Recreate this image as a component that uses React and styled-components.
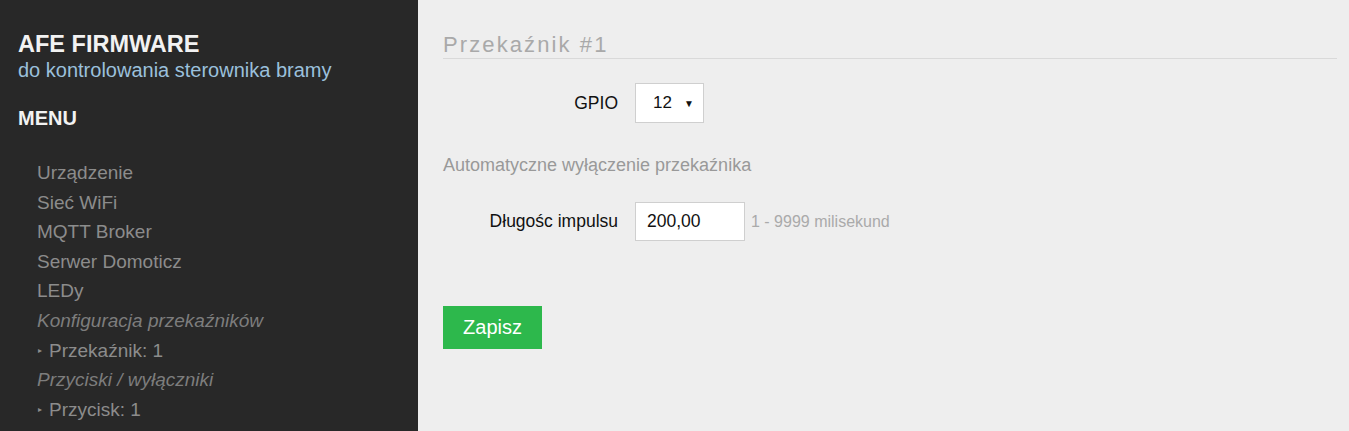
import React from "react";
import styled, { createGlobalStyle } from "styled-components";

const Global = createGlobalStyle`
  html, body { margin: 0; padding: 0; height: 100%; }
  body { font-family: "Liberation Sans", Arial, sans-serif; background: #eeeeee; }
  #root { height: 100%; }
`;

const Layout = styled.div`
  display: flex;
  min-height: 431px;
`;

const Sidebar = styled.aside`
  width: 418px;
  flex: none;
  background: #282828;
  padding: 31px 0 0 18px;
  box-sizing: border-box;
`;

const Brand = styled.h1`
  margin: 0;
  font-size: 23.5px;
  line-height: 26px;
  font-weight: bold;
  color: #f2f2f2;
`;

const Tagline = styled.div`
  margin-top: 1px;
  font-size: 20px;
  line-height: 24px;
  color: #9bc0dc;
`;

const MenuTitle = styled.h3`
  margin: 24px 0 0;
  font-size: 20px;
  line-height: 24px;
  font-weight: bold;
  color: #f2f2f2;
`;

const MenuList = styled.ul`
  list-style: none;
  margin: 28px 0 0;
  padding: 0 0 0 19px;
`;

const MenuItem = styled.li`
  font-size: 19px;
  line-height: 29.6px;
  color: ${(p) => (p.$section ? "#7d7d7d" : "#8c8c8c")};
  font-style: ${(p) => (p.$section ? "italic" : "normal")};
  display: flex;
  align-items: center;
`;

const Bullet = styled.span`
  font-size: 8px;
  margin: 0 7px 0 1px;
  color: #8c8c8c;
`;

const Main = styled.main`
  flex: 1;
  padding: 32px 12px 0 25px;
`;

const Title = styled.h2`
  margin: 0;
  font-size: 22px;
  line-height: 26px;
  font-weight: normal;
  letter-spacing: 2.1px;
  color: #a9a9a9;
  border-bottom: 1px solid #d9d9d9;
`;

const Row = styled.div`
  display: flex;
  align-items: center;
  margin-top: ${(p) => p.$mt}px;
`;

const Label = styled.label`
  width: 175px;
  text-align: right;
  padding-right: 17px;
  font-size: 17.5px;
  color: #111;
`;

const SelectBox = styled.div`
  width: 69px;
  height: 40px;
  box-sizing: border-box;
  background: #fff;
  border: 1px solid #cfcfcf;
  display: flex;
  align-items: center;
  justify-content: space-between;
  padding: 0 9px 0 17px;
  font-size: 17px;
  color: #111;
`;

const Arrow = styled.span`
  font-size: 10px;
`;

const Input = styled.div`
  width: 110px;
  height: 39px;
  box-sizing: border-box;
  background: #fff;
  border: 1px solid #cfcfcf;
  display: flex;
  align-items: center;
  padding: 0 11px;
  font-size: 17.5px;
  color: #111;
`;

const Hint = styled.span`
  margin-left: 6px;
  font-size: 16px;
  color: #aaaaaa;
`;

const Subheading = styled.div`
  margin-top: 32px;
  font-size: 18px;
  line-height: 20px;
  color: #999;
`;

const Button = styled.button`
  margin-top: 65px;
  width: 99px;
  height: 43px;
  border: none;
  background: #2db84c;
  color: #fff;
  font-family: inherit;
  font-size: 20px;
  padding: 0;
  display: block;
`;

const menu = [
  { t: "Urządzenie" },
  { t: "Sieć WiFi" },
  { t: "MQTT Broker" },
  { t: "Serwer Domoticz" },
  { t: "LEDy" },
  { t: "Konfiguracja przekaźników", s: true },
  { t: "Przekaźnik: 1", b: true },
  { t: "Przyciski / wyłączniki", s: true },
  { t: "Przycisk: 1", b: true },
];

export default function App() {
  return (
    <>
      <Global />
      <Layout>
        <Sidebar>
          <Brand>AFE FIRMWARE</Brand>
          <Tagline>do kontrolowania sterownika bramy</Tagline>
          <MenuTitle>MENU</MenuTitle>
          <MenuList>
            {menu.map((m) => (
              <MenuItem key={m.t} $section={m.s}>
                {m.b && <Bullet>▸</Bullet>}
                {m.t}
              </MenuItem>
            ))}
          </MenuList>
        </Sidebar>
        <Main>
          <Title>Przekaźnik #1</Title>
          <Row $mt={24}>
            <Label>GPIO</Label>
            <SelectBox>
              12 <Arrow>▼</Arrow>
            </SelectBox>
          </Row>
          <Subheading>Automatyczne wyłączenie przekaźnika</Subheading>
          <Row $mt={27}>
            <Label>Długośc impulsu</Label>
            <Input>200,00</Input>
            <Hint>1 - 9999 milisekund</Hint>
          </Row>
          <Button>Zapisz</Button>
        </Main>
      </Layout>
    </>
  );
}
